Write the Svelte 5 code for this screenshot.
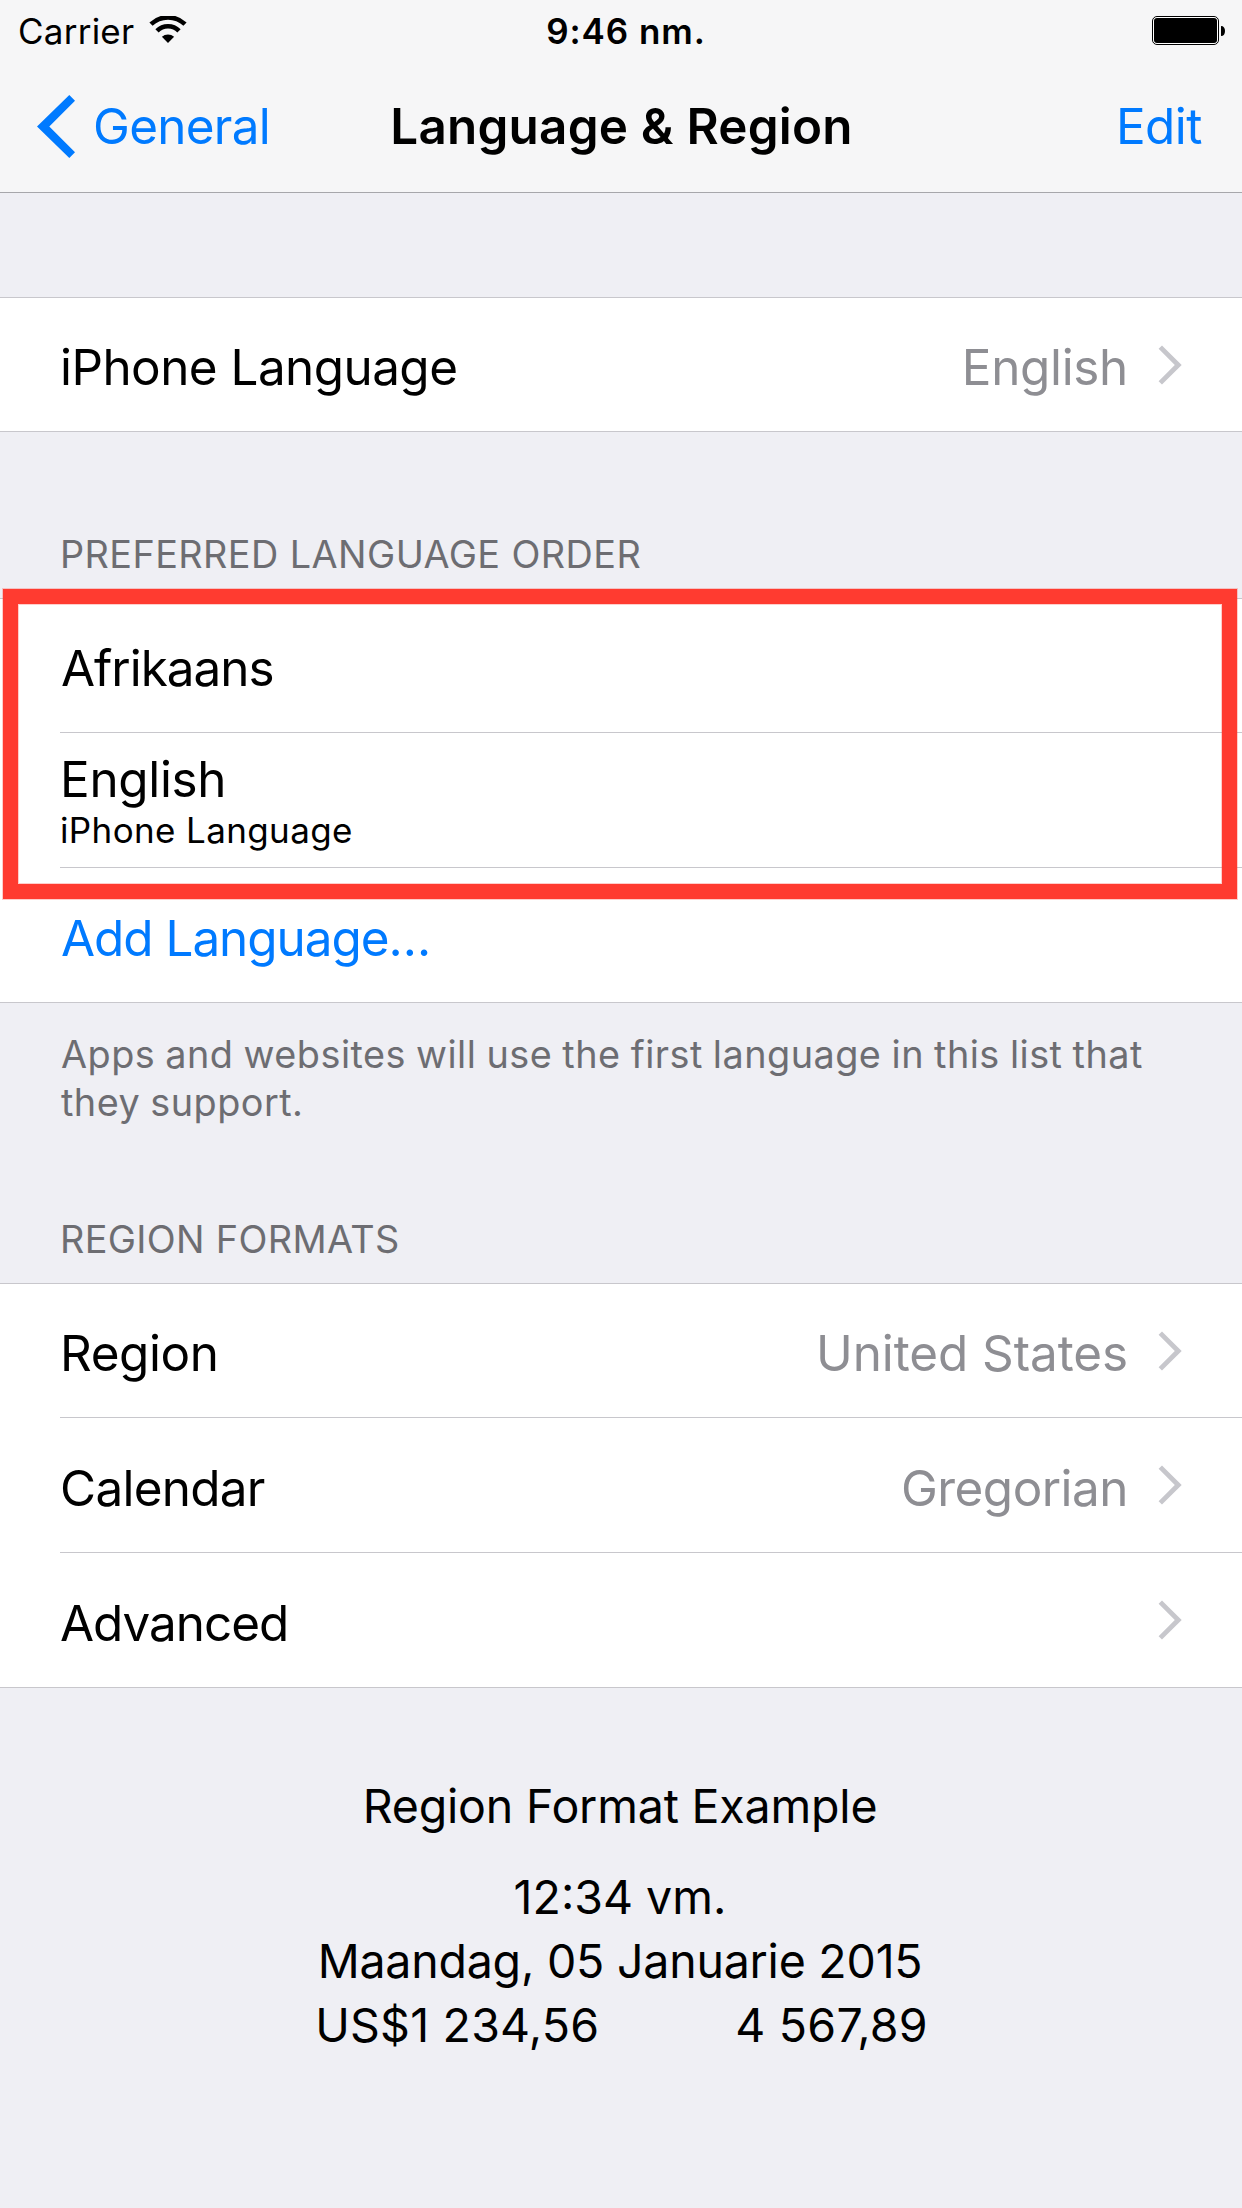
<script>
  const regionRows = [
    { label: 'Region', spacing: -0.4, value: 'United States', valueSpacing: -0.07 },
    { label: 'Calendar', spacing: -0.7, value: 'Gregorian', valueSpacing: -0.5 },
    { label: 'Advanced', spacing: -1, value: '', valueSpacing: 0 }
  ];
</script>

{#snippet chevron()}
  <svg class="chevron" viewBox="0 0 24 40" aria-hidden="true">
    <path d="M4 0.4 L23.7 20 L4 39.6 L0.6 36.2 L16.8 20 L0.6 3.8 Z" fill="#c7c7cc" />
  </svg>
{/snippet}

<div class="screen">
  <header>
    <div class="status">
      <div class="carrier">
        <span>Carrier</span>
        <svg class="wifi" viewBox="0 0 38 28" aria-hidden="true">
          <path d="M2 8.2 A24.5 24.5 0 0 1 36 8.2" fill="none" stroke="#000" stroke-width="4.6" />
          <path d="M8 14.9 A15.5 15.5 0 0 1 30 14.9" fill="none" stroke="#000" stroke-width="4.6" />
          <path d="M12.9 20.8 A9 9 0 0 1 25.1 20.8 L19 27 Z" fill="#000" />
        </svg>
      </div>
      <div class="time">9:46 nm.</div>
      <div class="power">
        <svg class="battery" viewBox="0 0 74 29" aria-hidden="true">
          <rect x="0.5" y="0.5" width="66" height="28" rx="4.5" fill="#fff" stroke="#000" />
          <rect x="2" y="2" width="63" height="25" rx="3" fill="#000" />
          <path d="M69 10 C71.7 10 73 12 73 15 S71.7 20 69 20 Z" fill="#000" />
        </svg>
      </div>
    </div>
    <nav>
      <div class="back">
        <svg viewBox="0 0 38 64" aria-hidden="true">
          <path d="M32.3 0 L38 5.8 L12.3 31.5 L38 57.2 L32.3 63 L0 31.5 Z" fill="#007aff" />
        </svg>
        <span>General</span>
      </div>
      <h1>Language &amp; Region</h1>
      <div class="edit">Edit</div>
    </nav>
  </header>

  <section class="group first">
    <div class="row">
      <div class="body">
        <span class="label phone">iPhone Language</span>
        <span class="value english">English</span>
        {@render chevron()}
      </div>
    </div>
  </section>

  <h2 class="order">PREFERRED LANGUAGE ORDER</h2>
  <section class="group">
    <div class="row"><div class="body"><span class="label tight">Afrikaans</span></div></div>
    <div class="row">
      <div class="body stacked">
        <span class="main">English</span>
        <span class="sub">iPhone Language</span>
      </div>
    </div>
    <div class="row"><div class="body"><span class="label tight link">Add Language…</span></div></div>
    <div class="highlight"></div>
  </section>
  <p class="note">
    <span>Apps and websites will use the first language in this list that</span><br />
    <span>they support.</span>
  </p>

  <h2 class="formats">REGION FORMATS</h2>
  <section class="group">
    {#each regionRows as row}
      <div class="row">
        <div class="body">
          <span class="label" style:letter-spacing="{row.spacing}px">{row.label}</span>
          <span class="value" style:letter-spacing="{row.valueSpacing}px">{row.value}</span>
          {@render chevron()}
        </div>
      </div>
    {/each}
  </section>

  <div class="example">
    <div class="heading">Region Format Example</div>
    <div class="clock">12:34 vm.</div>
    <div class="date">Maandag, 05 Januarie 2015</div>
    <div class="numbers"><span>US$1 234,56</span><span>4 567,89</span></div>
  </div>
</div>

<style>
  :global(body) {
    background: #efeff4;
  }

  .screen {
    width: 1242px;
    height: 2208px;
    overflow: hidden;
    background: #efeff4;
    color: #000;
    font-family: Inter, 'Liberation Sans', sans-serif;
    font-size: 49.4px;
  }

  header {
    height: 193px;
    box-sizing: border-box;
    border-bottom: 1px solid #a7a7ab;
    background: #f6f6f7;
  }

  .status,
  nav {
    display: grid;
    grid-template-columns: 1fr auto 1fr;
  }

  .status {
    height: 62px;
    font-size: 35px;
    line-height: 62px;
  }

  .carrier {
    display: flex;
    align-items: flex-start;
    padding-left: 18px;
    letter-spacing: 0.24px;
  }

  .wifi {
    width: 38px;
    height: 28px;
    margin: 16px 0 0 15px;
  }

  .time {
    padding-left: 10px;
    font-weight: 600;
    letter-spacing: 0.94px;
  }

  .power {
    display: flex;
    justify-content: flex-end;
    padding: 16px 16px 0 0;
  }

  .battery {
    width: 74px;
    height: 29px;
  }

  nav {
    height: 130px;
    line-height: 128px;
  }

  .back {
    display: flex;
    align-items: flex-start;
    padding-left: 37px;
    color: #007aff;
    letter-spacing: -0.7px;
  }

  .back svg {
    width: 38px;
    height: 64px;
    margin: 33px 18px 0 0;
  }

  h1 {
    margin: 0;
    padding-left: 1px;
    font-size: inherit;
    font-weight: 600;
    letter-spacing: 0.22px;
  }

  .edit {
    padding-right: 40px;
    color: #007aff;
    letter-spacing: -0.5px;
    text-align: right;
  }

  .group {
    position: relative;
    border: solid #c8c7cc;
    border-width: 1px 0;
    background: #fff;
  }

  .first {
    margin-top: 104px;
  }

  .row {
    padding-left: 60px;
  }

  .body {
    display: flex;
    align-items: center;
    box-sizing: border-box;
    height: 135px;
    padding-right: 60px;
    border-bottom: 1px solid #c8c7cc;
  }

  .row:first-child .body {
    height: 134px;
  }

  .row:nth-child(3) .body {
    height: 134px;
    border-bottom: 0;
  }

  .first .row:first-child .body {
    height: 133px;
    border-bottom: 0;
  }

  .label,
  .value {
    padding-top: 5px;
    line-height: 64px;
  }

  .label {
    flex: 1;
  }

  .value {
    color: #8e8e93;
  }

  .phone {
    letter-spacing: -0.53px;
  }

  .english {
    letter-spacing: -0.31px;
  }

  .tight {
    padding-left: 1px;
    letter-spacing: -1px;
  }

  .link {
    color: #007aff;
  }

  .chevron {
    width: 24px;
    height: 40px;
    margin-left: 30px;
  }

  .stacked {
    flex-direction: column;
    align-items: flex-start;
    padding-top: 17px;
  }

  .main {
    line-height: 58px;
    letter-spacing: -0.31px;
  }

  .sub {
    font-size: 35px;
    line-height: 44px;
    letter-spacing: 0.37px;
  }

  .highlight {
    position: absolute;
    top: -10px;
    left: 3px;
    box-sizing: border-box;
    width: 1234px;
    height: 310px;
    border: 15px solid #ff3b30;
    box-shadow: 0 0 0 1px rgba(255, 59, 48, 0.25), inset 0 0 0 1px rgba(255, 59, 48, 0.25);
  }

  h2 {
    box-sizing: border-box;
    margin: 0;
    padding-left: 60px;
    color: #6d6d72;
    font-size: 37.8px;
    font-weight: 400;
    line-height: 46px;
    letter-spacing: 0.43px;
  }

  .order {
    height: 166px;
    padding-top: 99px;
  }

  .formats {
    height: 157px;
    padding-top: 90px;
    letter-spacing: 0.35px;
  }

  .note {
    margin: 0;
    padding: 27px 0 0 61px;
    color: #6d6d72;
    font-size: 37.8px;
    line-height: 48px;
    letter-spacing: 0.48px;
    word-spacing: -1px;
    white-space: nowrap;
  }

  .example {
    padding: 86px 2px 0 0;
    font-size: 46.5px;
    line-height: 64px;
    text-align: center;
  }

  .heading {
    margin-bottom: 27px;
    letter-spacing: -0.18px;
  }

  .date {
    letter-spacing: -0.22px;
  }

  .numbers {
    display: flex;
    justify-content: center;
    gap: 136px;
    padding-left: 3px;
    letter-spacing: 0.22px;
  }
</style>
